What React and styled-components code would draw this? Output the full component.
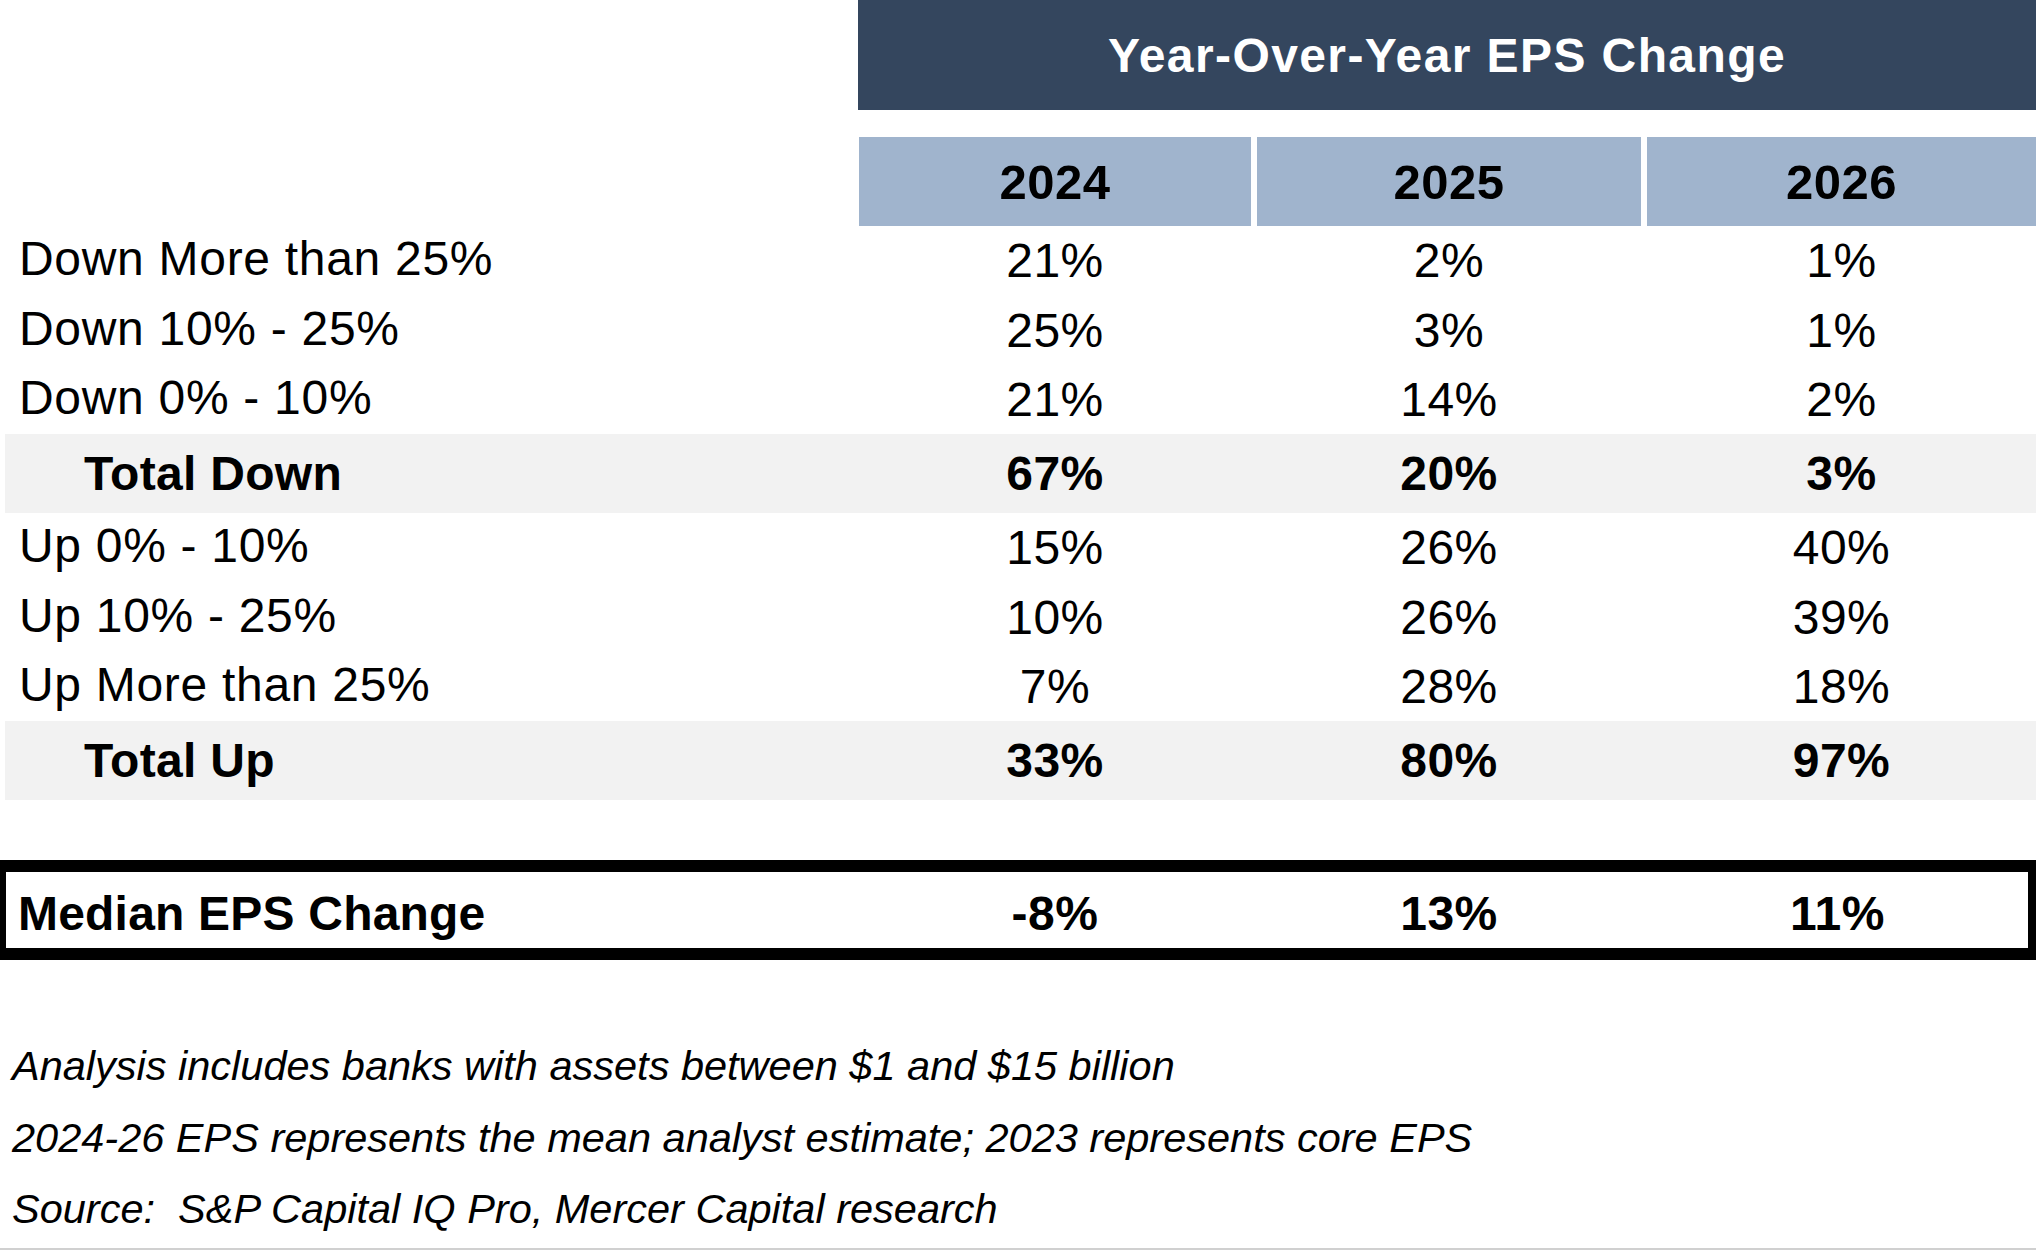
import React from 'react'
import styled, { createGlobalStyle } from 'styled-components'

const GlobalStyle = createGlobalStyle`
  html, body {
    margin: 0;
    padding: 0;
    background: #ffffff;
  }
  body {
    font-family: "Liberation Sans", Arial, sans-serif;
    color: #000000;
  }
`

const years = ['2024', '2025', '2026']

const rows = [
  { label: 'Down More than 25%', values: ['21%', '2%', '1%'] },
  { label: 'Down 10% - 25%', values: ['25%', '3%', '1%'] },
  { label: 'Down 0% - 10%', values: ['21%', '14%', '2%'] },
  { label: 'Total Down', values: ['67%', '20%', '3%'], total: true },
  { label: 'Up 0% - 10%', values: ['15%', '26%', '40%'] },
  { label: 'Up 10% - 25%', values: ['10%', '26%', '39%'] },
  { label: 'Up More than 25%', values: ['7%', '28%', '18%'] },
  { label: 'Total Up', values: ['33%', '80%', '97%'], total: true },
]

const median = ['-8%', '13%', '11%']

const notes = [
  'Analysis includes banks with assets between $1 and $15 billion',
  '2024-26 EPS represents the mean analyst estimate; 2023 represents core EPS',
  'Source:  S&P Capital IQ Pro, Mercer Capital research',
]

// data columns: 392 / 384 / rest, 6px apart, first one starting at x=859
const dataCols = '392px 384px 1fr'

const EpsTable = () => {
  return (
    <Page>
      <TitleRow>
        <TitleBar>Year-Over-Year EPS Change</TitleBar>
      </TitleRow>

      <HeaderRow>
        <span />
        {years.map((y) => (
          <YearCell key={y}>{y}</YearCell>
        ))}
      </HeaderRow>

      {rows.map((r) => (
        <DataRow key={r.label} $total={r.total}>
          <Label $total={r.total}>{r.label}</Label>
          {r.values.map((v, i) => (
            <Value key={i} $bold={r.total}>{v}</Value>
          ))}
        </DataRow>
      ))}

      <MedianBox>
        <MedianLabel>Median EPS Change</MedianLabel>
        {median.map((v, i) => (
          <Value key={i} $bold>{v}</Value>
        ))}
      </MedianBox>

      <Notes>
        {notes.map((n) => (
          <Note key={n}>{n}</Note>
        ))}
      </Notes>
    </Page>
  )
}

const Page = styled.div`
  width: 2036px;
  height: 1250px;
  overflow: hidden;
  background: #ffffff;
`

const TitleRow = styled.div`
  display: grid;
  grid-template-columns: 858px 1fr;
`

const TitleBar = styled.div`
  grid-column: 2;
  height: 110px;
  display: flex;
  align-items: center;
  justify-content: center;
  background: #34465e;
  color: #ffffff;
  font-size: 48px;
  font-weight: 700;
  letter-spacing: 1.4px;
`

const HeaderRow = styled.div`
  display: grid;
  grid-template-columns: 853px ${dataCols};
  column-gap: 6px;
  margin-top: 27px;
  height: 89px;
`

const YearCell = styled.div`
  display: flex;
  align-items: center;
  justify-content: center;
  background: #a0b4cd;
  font-size: 49px;
  font-weight: 700;
  letter-spacing: 0.5px;
`

const DataRow = styled.div`
  display: grid;
  grid-template-columns: ${(p) => (p.$total ? '848px' : '853px')} ${dataCols};
  column-gap: 6px;
  align-items: center;
  height: ${(p) => (p.$total ? '79px' : '69.4px')};
  margin-left: ${(p) => (p.$total ? '5px' : '0')};
  background: ${(p) => (p.$total ? '#f2f2f2' : 'transparent')};
`

const Label = styled.div`
  padding-left: ${(p) => (p.$total ? '79px' : '19px')};
  padding-bottom: ${(p) => (p.$total ? '0' : '4px')};
  font-size: 48px;
  font-weight: ${(p) => (p.$total ? 700 : 400)};
  letter-spacing: ${(p) => (p.$total ? '0.3px' : '0.7px')};
  white-space: nowrap;
`

const Value = styled.div`
  text-align: center;
  font-size: 48px;
  font-weight: ${(p) => (p.$bold ? 700 : 400)};
  letter-spacing: 0.5px;
`

const MedianBox = styled.div`
  box-sizing: border-box;
  display: grid;
  grid-template-columns: 847px ${dataCols};
  column-gap: 6px;
  align-items: center;
  height: 100px;
  margin-top: 60px;
  padding-top: 6px;
  border-style: solid;
  border-color: #000000;
  border-width: 12px 8px 12px 6px;
`

const MedianLabel = styled.div`
  padding-left: 12px;
  font-size: 48px;
  font-weight: 700;
  letter-spacing: 0.2px;
  white-space: nowrap;
`

const Notes = styled.div`
  margin-top: 70px;
  padding-left: 12px;
  height: 218px;
  border-bottom: 2px solid #d0d0d0;
`

const Note = styled.div`
  height: 71.5px;
  line-height: 71.5px;
  font-size: 41.5px;
  font-style: italic;
  white-space: pre;
`

export default function App() {
  return (
    <>
      <GlobalStyle />
      <EpsTable />
    </>
  )
}
